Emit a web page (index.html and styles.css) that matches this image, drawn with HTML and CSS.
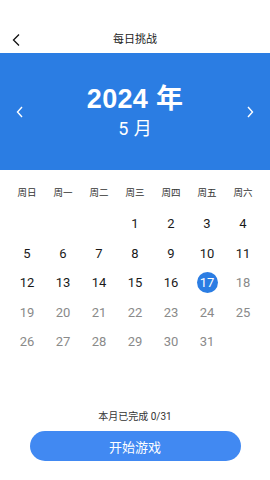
FILE: index.html
```html
<!DOCTYPE html>
<html lang="zh">
<head>
<meta charset="utf-8">
<link rel="stylesheet" href="styles.css">
</head>
<body>
<div class="page">
  <header class="topbar">
    <svg class="back" width="10" height="14" viewBox="0 0 10 14"><path d="M8 1.5 L2.5 7 L8 12.5" fill="none" stroke="#111" stroke-width="1.3"/></svg>
    <div class="title">每日挑战</div>
  </header>
  <section class="banner">
    <svg class="nav" width="10" height="14" viewBox="0 0 10 14"><path d="M7 2 L2.5 7 L7 12" fill="none" stroke="#fff" stroke-width="1.4"/></svg>
    <div class="ym">
      <div class="year">2024 年</div>
      <div class="month">5 月</div>
    </div>
    <svg class="nav" width="10" height="14" viewBox="0 0 10 14"><path d="M3 2 L7.5 7 L3 12" fill="none" stroke="#fff" stroke-width="1.4"/></svg>
  </section>
  <div class="weekdays">
    <span>周日</span><span>周一</span><span>周二</span><span>周三</span><span>周四</span><span>周五</span><span>周六</span>
  </div>
  <div class="days">
    <span></span><span></span><span></span>
    <span>1</span><span>2</span><span>3</span><span>4</span>
    <span>5</span><span>6</span><span>7</span><span>8</span><span>9</span><span>10</span><span>11</span>
    <span>12</span><span>13</span><span>14</span><span>15</span><span>16</span><span class="today"><i>17</i></span><span class="f">18</span>
    <span class="f">19</span><span class="f">20</span><span class="f">21</span><span class="f">22</span><span class="f">23</span><span class="f">24</span><span class="f">25</span>
    <span class="f">26</span><span class="f">27</span><span class="f">28</span><span class="f">29</span><span class="f">30</span><span class="f">31</span><span></span>
  </div>
  <div class="footer">
    <div class="progress">本月已完成 0/31</div>
    <button class="start">开始游戏</button>
  </div>
</div>
</body>
</html>
```
FILE: styles.css
```css
html, body { margin: 0; padding: 0; background: #fff; }
body { font-family: Roboto, "Noto Sans CJK SC", sans-serif; color: #111; }
.page { width: 270px; height: 480px; display: flex; flex-direction: column; }
.topbar { height: 53px; display: flex; align-items: flex-end; justify-content: center; position: relative; box-sizing: border-box; padding-bottom: 5px; }
.back { position: absolute; left: 11px; bottom: 6px; }
.title { font-size: 11px; line-height: 16px; color: #222; }
.banner { height: 117px; background: #2b7de3; display: flex; align-items: center; justify-content: space-between; padding: 0 15px; box-sizing: border-box; color: #fff; }
.ym { display: flex; flex-direction: column; align-items: center; }
.year { font-size: 27px; font-weight: 700; line-height: 32px; font-family: "Liberation Sans", "Noto Sans CJK SC", sans-serif; letter-spacing: 0.3px; }
.month { font-size: 18px; line-height: 22px; margin-top: 3px; word-spacing: 1px; }
.weekdays { display: grid; grid-template-columns: repeat(7, 36px); padding: 16px 9px 0; height: 14px; }
.weekdays span { text-align: center; font-size: 9.5px; line-height: 14px; color: #333; }
.days { display: grid; grid-template-columns: repeat(7, 36px); grid-auto-rows: 29.5px; padding: 9px 9px 0; }
.days span { display: flex; align-items: center; justify-content: center; font-size: 13px; color: #1a1a1a; }
.days span.f { color: #8a8a8a; }
.days span.today i { font-style: normal; width: 21px; height: 21px; border-radius: 50%; background: #2b7de3; color: #fff; display: flex; align-items: center; justify-content: center; }
.footer { margin-top: auto; display: flex; flex-direction: column; align-items: center; padding-bottom: 19px; }
.progress { font-size: 10px; color: #333; line-height: 14px; margin-bottom: 7px; }
.start { width: 211px; height: 30px; border: none; border-radius: 15px; background: #4189f2; color: #fff; font-size: 13px; font-family: Roboto, "Noto Sans CJK SC", sans-serif; padding: 0; }
```
